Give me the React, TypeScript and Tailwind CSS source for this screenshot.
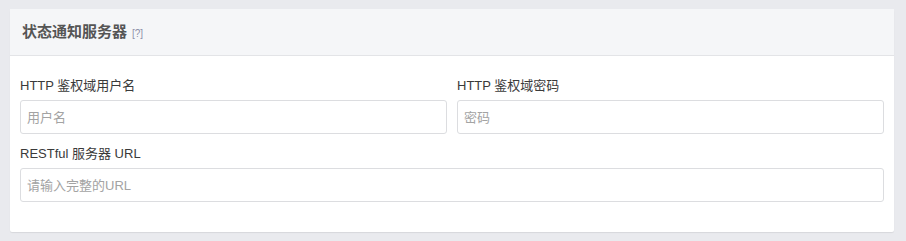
import React from "react";

const font = {
  fontFamily: '"Liberation Sans", "Noto Sans CJK SC", sans-serif',
};

interface FieldProps {
  label: string;
  placeholder: string;
  type?: string;
}

const Field: React.FC<FieldProps> = ({ label, placeholder, type = "text" }) => (
  <div className="mb-[10px] flex flex-col">
    <label className="mb-[4px] h-[20px] text-[13px] leading-[20px] text-[#3a3a3a]">
      {label}
    </label>
    <input
      type={type}
      placeholder={placeholder}
      className="h-[34px] w-full rounded-[3px] border border-[#dcdde0] bg-white px-[6px] text-[13px] text-[#333] outline-none placeholder:text-[#a3a3a3]"
    />
  </div>
);

export default function App() {
  return (
    <div className="min-h-[241px] bg-[#e9eaee] pl-[10px] pr-[12px] pt-[9px] pb-[9px]" style={font}>
      <div className="rounded-[2px] bg-white shadow-[0_1px_1px_rgba(0,0,0,0.08)]">
        <div className="flex h-[47px] items-center border-b border-[#e3e4e7] bg-[#f5f6f8] px-[12px]">
          <span className="text-[15px] font-bold text-[#555]">状态通知服务器</span>
          <span className="ml-[5px] mt-[3px] text-[10px] text-[#8c90a8]">[?]</span>
        </div>
        <div className="px-[10px] pt-[20px] pb-[20px]">
          <div className="grid grid-cols-2 gap-x-[10px]">
            <Field label="HTTP 鉴权域用户名" placeholder="用户名" />
            <Field label="HTTP 鉴权域密码" placeholder="密码" type="password" />
          </div>
          <Field label="RESTful 服务器 URL" placeholder="请输入完整的URL" />
        </div>
      </div>
    </div>
  );
}
